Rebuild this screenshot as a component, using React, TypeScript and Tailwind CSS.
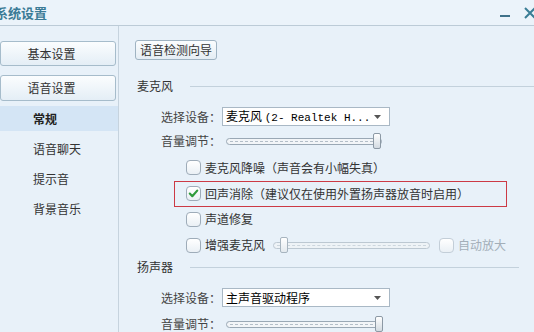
import React from "react";

const font = { fontFamily: '"Noto Sans CJK SC", "Noto Sans", sans-serif' };

function Slider({ width, thumb, disabled }: { width: number; thumb: number; disabled?: boolean }) {
  return (
    <div className="relative h-[16px]" style={{ width }}>
      <div
        className={`absolute left-0 right-0 top-[5px] h-[7px] rounded-full border ${
          disabled ? "border-[#bcc8d2] bg-[#eef3f7]" : "border-[#9aa8b5] bg-[#f2f5f8]"
        }`}
      >
        <div
          className={`absolute left-[3px] right-[3px] top-[2px] border-t border-dashed ${
            disabled ? "border-[#ccd6de]" : "border-[#b3bec8]"
          }`}
        />
      </div>
      <div
        className={`absolute top-0 h-[16px] w-[8px] rounded-[2px] border bg-gradient-to-b ${
          disabled ? "border-[#a7b4bf] from-white to-[#e3e9ee]" : "border-[#8c99a5] from-white to-[#d3dbe2]"
        }`}
        style={{ left: thumb }}
      />
    </div>
  );
}

function Check({ checked, disabled }: { checked?: boolean; disabled?: boolean }) {
  return (
    <div
      className={`flex h-[15px] w-[15px] shrink-0 items-center justify-center rounded-[4px] border bg-gradient-to-b from-white to-[#eaf0f5] ${
        disabled ? "border-[#c3ced8]" : "border-[#9eacb9]"
      }`}
    >
      {checked && (
        <svg width="11" height="11" viewBox="0 0 11 11">
          <path d="M1.8 5.6 L4.3 8.2 L9.2 2.6" fill="none" stroke="#2f9b3c" strokeWidth="2.2" strokeLinecap="round" strokeLinejoin="round" />
        </svg>
      )}
    </div>
  );
}

function Select({ children }: { children: React.ReactNode }) {
  return (
    <div className="ml-[1px] flex h-[19px] w-[168px] items-center justify-between border border-[#a9b8c5] bg-white pl-[3px] pr-[8px] text-[12px] text-black">
      <span className="whitespace-nowrap leading-none">{children}</span>
      <svg width="7" height="4" viewBox="0 0 7 4">
        <path d="M0 0 H7 L3.5 4 Z" fill="#555" />
      </svg>
    </div>
  );
}

function Heading({ text, lineRight }: { text: string; lineRight: number }) {
  return (
    <div className="flex h-[16px] items-center pl-[18px]" style={{ paddingRight: lineRight }}>
      <span className="w-[53px] text-[12px] leading-none text-[#333]">{text}</span>
      <div className="h-px flex-1 bg-[#c3d1dc]" />
    </div>
  );
}

export default function App() {
  return (
    <div className="h-[332px] w-[534px] overflow-hidden bg-[#e8f1f9] text-[#333]" style={font}>
      {/* title bar */}
      <div className="flex h-[26px] items-center justify-between border-b border-[#bccbd7] bg-[#ebf3fa]">
        <span className="ml-[-5px] text-[13px] font-bold leading-none text-[#3b7b96]">系统设置</span>
        <div className="flex items-center gap-[14px]">
          <svg width="10" height="4" viewBox="0 0 10 4" className="mt-[6px]">
            <rect x="0" y="1" width="10" height="2" fill="#3f7189" />
          </svg>
          <svg width="10" height="12" viewBox="0 0 10 12">
            <path d="M1 1 L11 11 M11 1 L1 11" stroke="#3a7d95" strokeWidth="2" />
          </svg>
        </div>
      </div>

      <div className="flex h-[306px]">
        {/* left nav */}
        <div className="flex w-[119px] shrink-0 flex-col border-r border-[#c6d3de] pt-[15px]">
          <div className="flex h-[25px] w-[116px] items-center justify-center rounded-[3px] border border-[#a6bccb] bg-gradient-to-b from-[#fbfdfe] to-[#e4eef6] text-[12px] text-[#333]">
            <span className="ml-[-13px]">基本设置</span>
          </div>
          <div className="mt-[9px] flex h-[26px] w-[116px] items-center justify-center rounded-[3px] border border-[#a6bccb] bg-gradient-to-b from-[#fbfdfe] to-[#e4eef6] text-[12px] text-[#333]">
            <span className="ml-[-13px]">语音设置</span>
          </div>
          <div className="mt-[5px] flex h-[25px] items-center bg-[#d4e5f5] pl-[33px] text-[12px] font-bold text-[#222]">常规</div>
          <div className="mt-[3px] flex h-[30px] items-center pl-[33px] text-[12px]">语音聊天</div>
          <div className="flex h-[30px] items-center pl-[33px] text-[12px]">提示音</div>
          <div className="flex h-[30px] items-center pl-[33px] text-[12px]">背景音乐</div>
        </div>

        {/* right content */}
        <div className="flex flex-1 flex-col pt-[14px]">
          <div className="ml-[16px] flex h-[20px] w-[82px] items-center justify-center rounded-[3px] border border-[#9fb3c2] bg-gradient-to-b from-[#fbfdfe] to-[#e4edf4] text-[12px] text-[#333]">
            语音检测向导
          </div>

          <div className="mt-[18px]">
            <Heading text="麦克风" lineRight={0} />
          </div>

          <div className="mt-[13px] flex h-[19px] items-center pl-[42px]">
            <span className="w-[60px] text-[12px] text-[#444]">选择设备：</span>
            <Select>
              麦克风 <span style={{ fontFamily: '"Liberation Mono", monospace', fontSize: 11 }}>(2- Realtek H...</span>
            </Select>
          </div>

          <div className="mt-[7px] flex h-[16px] items-center pl-[42px]">
            <span className="w-[65px] text-[12px] text-[#444]">音量调节：</span>
            <Slider width={156} thumb={147} />
          </div>

          <div className="mt-[6px] flex h-[26px] items-center gap-[4px] pl-[67px]">
            <Check />
            <span className="text-[12px] text-[#333]">麦克风降噪（声音会有小幅失真）</span>
          </div>

          <div className="ml-[55px] flex h-[26px] w-[333px] items-center gap-[4px] border border-[#cc3a45] pl-[11px]">
            <Check checked />
            <span className="text-[12px] text-[#333]">回声消除（建议仅在使用外置扬声器放音时启用）</span>
          </div>

          <div className="flex h-[26px] items-center gap-[4px] pl-[67px]">
            <Check />
            <span className="text-[12px] text-[#333]">声道修复</span>
          </div>

          <div className="flex h-[26px] items-center pl-[67px]">
            <Check />
            <span className="ml-[4px] w-[68px] text-[12px] text-[#333]">增强麦克风</span>
            <Slider width={157} thumb={7} disabled />
            <div className="ml-[9px]">
              <Check disabled />
            </div>
            <span className="ml-[4px] text-[12px] text-[#a3aeb8]">自动放大</span>
          </div>

          <div className="mt-[1px]">
            <Heading text="扬声器" lineRight={15} />
          </div>

          <div className="mt-[13px] flex h-[19px] items-center pl-[42px]">
            <span className="w-[60px] text-[12px] text-[#444]">选择设备：</span>
            <Select>主声音驱动程序</Select>
          </div>

          <div className="mt-[9px] flex h-[16px] items-center pl-[42px]">
            <span className="w-[65px] text-[12px] text-[#444]">音量调节：</span>
            <Slider width={156} thumb={149} />
          </div>
        </div>
      </div>
    </div>
  );
}
